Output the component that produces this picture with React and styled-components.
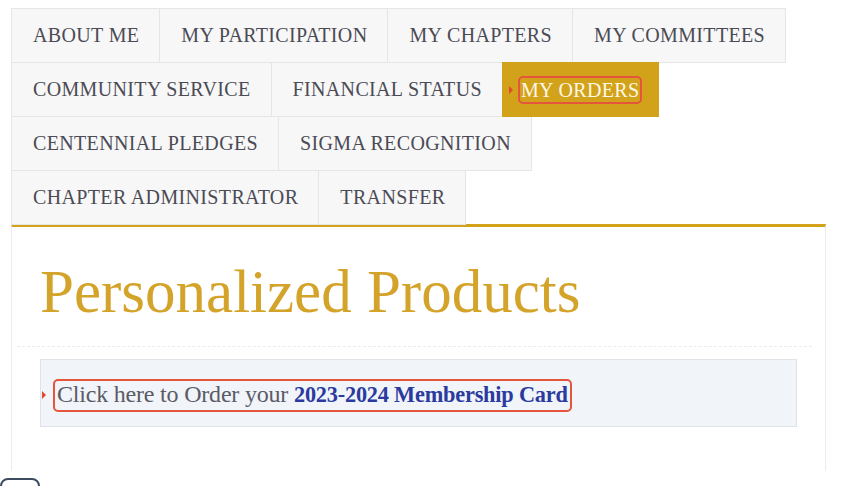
import React from "react";
import styled, { createGlobalStyle } from "styled-components";

const GOLD = "#d3a21b";

const Global = createGlobalStyle`
  html, body {
    margin: 0;
    padding: 0;
    background: #ffffff;
  }
  body {
    font-family: "Liberation Serif", "DejaVu Serif", serif;
  }
`;

const Page = styled.div`
  width: 841px;
  height: 486px;
  overflow: hidden;
  box-sizing: border-box;
  padding: 8px 15px 0 11px;
`;

const TabList = styled.div`
  display: flex;
  flex-direction: column;
`;

const TabRow = styled.div`
  display: flex;
  margin-bottom: -1px;
`;

const Tab = styled.div`
  position: relative;
  box-sizing: border-box;
  height: 55px;
  display: flex;
  align-items: center;
  padding: ${p => (p.$active ? "0 16px 0 15px" : "0 20px 0 21px")};
  margin-right: -1px;
  border: 1px solid ${p => (p.$active ? GOLD : "#e6e6e6")};
  background: ${p => (p.$active ? GOLD : "#f7f7f7")};
  color: ${p => (p.$active ? "#fff8e4" : "#4b4b55")};
  font-size: 20px;
  letter-spacing: 0.35px;
  text-transform: uppercase;
  white-space: nowrap;
  z-index: ${p => (p.$active ? 1 : 0)};
`;

const Focus = styled.span`
  position: relative;
  display: inline-block;
  border: 2px solid ${p => p.$color || "#e4553b"};
  border-radius: 5px;
  padding: ${p => p.$pad || "0 1px"};
  line-height: ${p => p.$lh || "normal"};

  &::before {
    content: "";
    position: absolute;
    left: ${p => p.$arrowLeft || "-13px"};
    top: 50%;
    margin-top: -4px;
    border-top: 4px solid transparent;
    border-bottom: 4px solid transparent;
    border-left: 4px solid #e4452b;
  }
`;

const Panel = styled.div`
  border-top: 3px solid ${GOLD};
  border-left: 1px solid #ececec;
  border-right: 1px solid #ececec;
  height: 247px;
  box-sizing: border-box;
  padding: 34px 0 0;
`;

const Heading = styled.h1`
  margin: 0 0 0 28px;
  font-family: "Liberation Serif", "DejaVu Serif", serif;
  font-weight: normal;
  font-size: 61px;
  line-height: 62px;
  color: #d4a32a;
`;

const Divider = styled.div`
  margin: 23px 13px 0 5px;
  border-top: 1px dashed #ececec;
`;

const Notice = styled.div`
  margin: 12px 28px 0 28px;
  height: 68px;
  box-sizing: border-box;
  background: #f1f4f9;
  border: 1px solid #dfe2e6;
  display: flex;
  align-items: center;
  padding: 4px 0 0 12px;
`;

const Lead = styled.span`
  font-size: 24px;
  color: #5b5b66;
  letter-spacing: -0.2px;
`;

const Strong = styled.a`
  font-size: 22.3px;
  font-weight: bold;
  color: #2b3a9e;
  text-decoration: none;
  letter-spacing: -0.2px;
`;

const Handle = styled.div`
  margin: 7px 0 0 -11px;
  width: 40px;
  height: 24px;
  box-sizing: border-box;
  border: 2px solid #3d4b5f;
  border-radius: 8px;
`;

const rows = [
  ["About Me", "My Participation", "My Chapters", "My Committees"],
  ["Community Service", "Financial Status", "My Orders"],
  ["Centennial Pledges", "Sigma Recognition"],
  ["Chapter Administrator", "Transfer"],
];

export default function App() {
  return (
    <>
      <Global />
      <Page>
        <TabList>
          {rows.map((row, i) => (
            <TabRow key={i}>
              {row.map(label =>
                label === "My Orders" ? (
                  <Tab key={label} $active>
                    <Focus $arrowLeft="-11px" $pad="0 1px" $lh="24px">
                      {label}
                    </Focus>
                  </Tab>
                ) : (
                  <Tab key={label}>{label}</Tab>
                )
              )}
            </TabRow>
          ))}
        </TabList>
        <Panel>
          <Heading>Personalized Products</Heading>
          <Divider />
          <Notice>
            <Focus $arrowLeft="-13px" $pad="0 2px" $lh="27px">
              <Lead>Click here to Order your </Lead>
              <Strong href="#">2023-2024 Membership Card</Strong>
            </Focus>
          </Notice>
        </Panel>
        <Handle />
      </Page>
    </>
  );
}
